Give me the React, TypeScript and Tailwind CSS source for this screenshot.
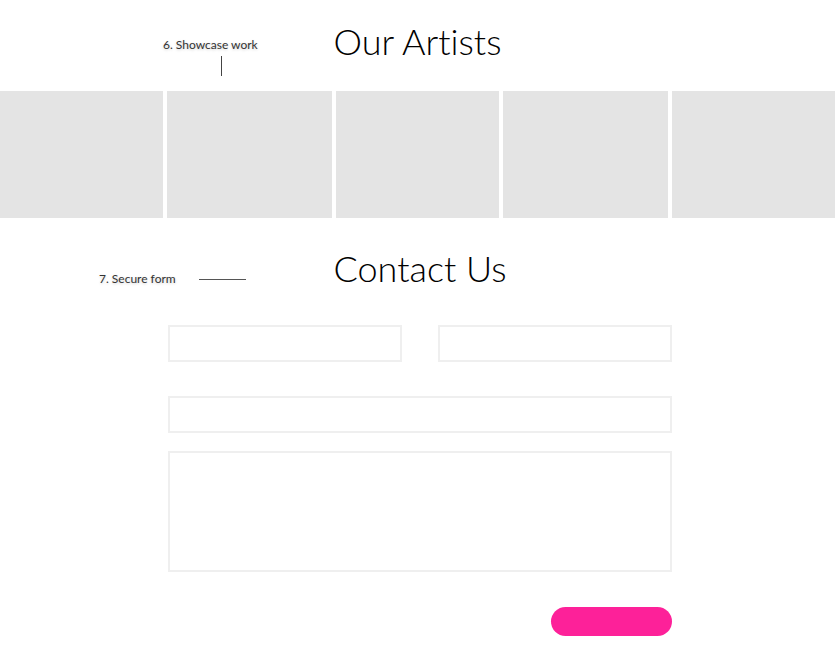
const tiles = [0, 1, 2, 3, 4];

function Note({ label, className }: { label: string; className: string }) {
  return (
    <span
      className={`absolute text-[12px] text-[#333] [text-shadow:0_1px_3px_rgba(0,0,0,0.2)] ${className}`}
    >
      {label}
    </span>
  );
}

export default function App() {
  return (
    <div className="relative min-h-[672px] w-[835px] overflow-hidden bg-white font-['Lato',sans-serif] [font-variant-ligatures:none]">
      <section className="relative">
        <h1 className="pt-[19px] text-center text-[36px] font-light leading-[44px] text-black">
          Our Artists
        </h1>
        <Note label="6. Showcase work" className="left-[163px] top-[36px]" />
        <div className="absolute left-[221px] top-[56px] h-[20px] w-px bg-[#444]" />

        <div className="mt-[28px] grid h-[127px] grid-cols-[163px_165px_163px_165px_163px] gap-x-[4px]">
          {tiles.map((t) => (
            <div key={t} className="bg-[#e4e4e4]" />
          ))}
        </div>
      </section>

      <section className="relative">
        <h2 className="pt-[28px] text-center text-[36px] font-light leading-[44px] text-black">
          <span className="ml-[5px]">Contact Us</span>
        </h2>
        <Note label="7. Secure form" className="left-[99px] top-[52px]" />
        <div className="absolute left-[199px] top-[61px] h-px w-[47px] bg-[#555]" />

        <form className="ml-[168px] mt-[35px] flex w-[504px] flex-col">
          <div className="grid grid-cols-[234px_234px] gap-x-[36px]">
            <input className="h-[37px] border-2 border-[#efefef] bg-white outline-none" />
            <input className="h-[37px] border-2 border-[#efefef] bg-white outline-none" />
          </div>
          <input className="mt-[34px] h-[37px] border-2 border-[#efefef] bg-white outline-none" />
          <textarea className="mt-[18px] h-[121px] resize-none border-2 border-[#efefef] bg-white outline-none" />
          <div className="mt-[35px] flex justify-end">
            <button type="button" className="h-[29px] w-[121px] rounded-full bg-[#fd2199]" />
          </div>
        </form>
      </section>
    </div>
  );
}
